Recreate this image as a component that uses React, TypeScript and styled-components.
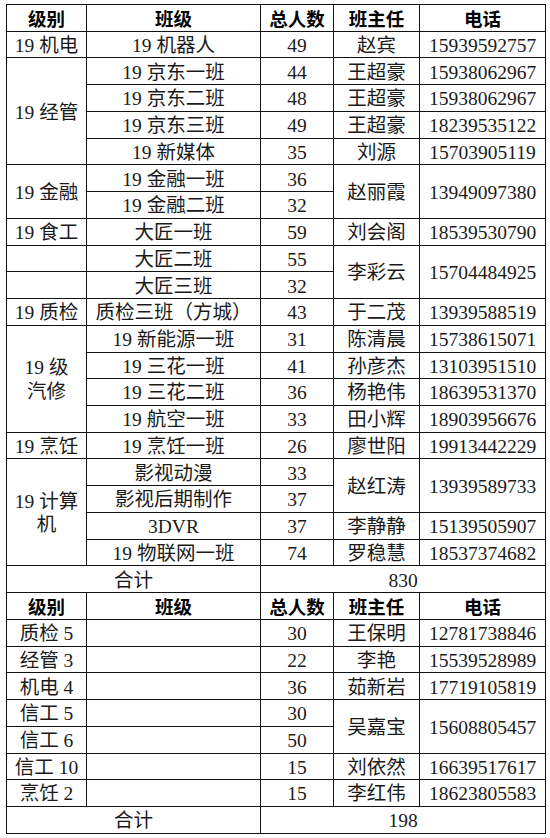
import React from 'react';
import styled, { createGlobalStyle } from 'styled-components';

type CellDef = string | { t: React.ReactNode; rs?: number };

const GlobalStyle = createGlobalStyle`
  html, body {
    margin: 0;
    padding: 0;
    background: #ffffff;
  }
`;

const Page = styled.div`
  padding: 4px 0 0 6px;
`;

const Sheet = styled.table`
  width: 540px;
  table-layout: fixed;
  border-collapse: collapse;
  font-family: 'Liberation Serif', 'Noto Sans CJK SC', serif;
  font-size: 19.5px;
  color: #1a1a1a;
  border: 1px solid #111;
`;

const Col = styled.col<{ $w: number }>`
  width: ${(p) => p.$w}px;
`;

const Row = styled.tr`
  height: 26.74px;
`;

const HeadCell = styled.th`
  border: 1px solid #111;
  padding: 1px 0 0;
  font-family: 'Noto Sans CJK SC', sans-serif;
  font-size: 18.5px;
  font-weight: 700;
  color: #000;
  line-height: 1.2;
  text-align: center;
  vertical-align: middle;
`;

const Cell = styled.td`
  border: 1px solid #111;
  padding: 2px 0 0;
  line-height: 1.2;
  text-align: center;
  vertical-align: middle;
  white-space: nowrap;
`;

const columns = [80, 174, 73, 86, 126];
const heads = ['级别', '班级', '总人数', '班主任', '电话'];

const firstRows: CellDef[][] = [
  ['19 机电', '19 机器人', '49', '赵宾', '15939592757'],
  [{ t: '19 经管', rs: 4 }, '19 京东一班', '44', '王超豪', '15938062967'],
  ['19 京东二班', '48', '王超豪', '15938062967'],
  ['19 京东三班', '49', '王超豪', '18239535122'],
  ['19 新媒体', '35', '刘源', '15703905119'],
  [{ t: '19 金融', rs: 2 }, '19 金融一班', '36', { t: '赵丽霞', rs: 2 }, { t: '13949097380', rs: 2 }],
  ['19 金融二班', '32'],
  ['19 食工', '大匠一班', '59', '刘会阁', '18539530790'],
  ['', '大匠二班', '55', { t: '李彩云', rs: 2 }, { t: '15704484925', rs: 2 }],
  ['', '大匠三班', '32'],
  ['19 质检', '质检三班（方城）', '43', '于二茂', '13939588519'],
  [{ t: <>19 级<br />汽修</>, rs: 4 }, '19 新能源一班', '31', '陈清晨', '15738615071'],
  ['19 三花一班', '41', '孙彦杰', '13103951510'],
  ['19 三花二班', '36', '杨艳伟', '18639531370'],
  ['19 航空一班', '33', '田小辉', '18903956676'],
  ['19 烹饪', '19 烹饪一班', '26', '廖世阳', '19913442229'],
  [{ t: <>19 计算<br />机</>, rs: 4 }, '影视动漫', '33', { t: '赵红涛', rs: 2 }, { t: '13939589733', rs: 2 }],
  ['影视后期制作', '37'],
  ['3DVR', '37', '李静静', '15139505907'],
  ['19 物联网一班', '74', '罗稳慧', '18537374682'],
];

const secondRows: CellDef[][] = [
  ['质检 5', '', '30', '王保明', '12781738846'],
  ['经管 3', '', '22', '李艳', '15539528989'],
  ['机电 4', '', '36', '茹新岩', '17719105819'],
  ['信工 5', '', '30', { t: '吴嘉宝', rs: 2 }, { t: '15608805457', rs: 2 }],
  ['信工 6', '', '50'],
  ['信工 10', '', '15', '刘依然', '16639517617'],
  ['烹饪 2', '', '15', '李红伟', '18623805583'],
];

const renderCell = (c: CellDef, i: number) =>
  typeof c === 'string' ? (
    <Cell key={i}>{c}</Cell>
  ) : (
    <Cell key={i} rowSpan={c.rs}>
      {c.t}
    </Cell>
  );

const Section: React.FC<{ rows: CellDef[][]; total: string }> = ({ rows, total }) => (
  <tbody>
    <Row>
      {heads.map((h) => (
        <HeadCell key={h}>{h}</HeadCell>
      ))}
    </Row>
    {rows.map((r, i) => (
      <Row key={i}>{r.map(renderCell)}</Row>
    ))}
    <Row>
      <Cell colSpan={2}>合计</Cell>
      <Cell colSpan={3}>{total}</Cell>
    </Row>
  </tbody>
);

const App: React.FC = () => (
  <Page>
    <GlobalStyle />
    <Sheet>
      <colgroup>
        {columns.map((w, i) => (
          <Col key={i} $w={w} />
        ))}
      </colgroup>
      <Section rows={firstRows} total="830" />
      <Section rows={secondRows} total="198" />
    </Sheet>
  </Page>
);

export default App;
